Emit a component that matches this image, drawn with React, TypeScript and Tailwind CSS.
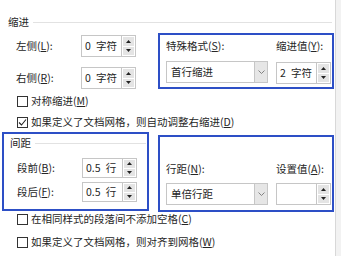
import type { ReactNode } from "react";

const boxBorder = "border-[#c6c6c6]";
const blue = "border-2 border-[#2d4fc6]";
const txt = "text-[10.5px] whitespace-nowrap";

function U({ children }: { children: ReactNode }) {
  return <span className="underline underline-offset-1">{children}</span>;
}

function Spinner() {
  return (
    <div className={`flex w-[14px] flex-col gap-[1px] border ${boxBorder} border-l-0 bg-white p-[1px]`}>
      <div className="flex flex-1 items-center justify-center bg-[#e4e4e4]">
        <svg width="5" height="3" viewBox="0 0 5 3">
          <path d="M2.5 0L5 3H0z" fill="#222" />
        </svg>
      </div>
      <div className="flex flex-1 items-center justify-center bg-[#e4e4e4]">
        <svg width="5" height="3" viewBox="0 0 5 3">
          <path d="M0 0h5L2.5 3z" fill="#222" />
        </svg>
      </div>
    </div>
  );
}

function SpinBox({ value, h = "h-[22px]" }: { value: string; h?: string }) {
  return (
    <div className={`flex ${h}`}>
      <div className={`flex w-[41px] items-center border ${boxBorder} bg-white pl-[3px] ${txt}`}>
        {value}
      </div>
      <Spinner />
    </div>
  );
}

function Select({ value }: { value: string }) {
  return (
    <div className={`flex h-[22px] w-[102px] border ${boxBorder} bg-white`}>
      <div className={`flex flex-1 items-center pl-[4px] ${txt}`}>{value}</div>
      <div className={`flex w-[13px] items-center justify-center border-l ${boxBorder} bg-[#e6e6e6]`}>
        <svg width="7" height="4" viewBox="0 0 7 4">
          <path d="M0.5 0.5L3.5 3.5L6.5 0.5" fill="none" stroke="#777" strokeWidth="0.9" />
        </svg>
      </div>
    </div>
  );
}

function Check({ checked, children, className = "" }: { checked?: boolean; children: ReactNode; className?: string }) {
  return (
    <div className={`flex h-[14px] items-center pl-[17px] ${className}`}>
      <div className="flex h-[11px] w-[11px] items-center justify-center border border-[#333] bg-white">
        {checked && (
          <svg width="9" height="9" viewBox="0 0 9 9">
            <path d="M1 4.5L3.5 7L8 1.5" fill="none" stroke="#222" strokeWidth="1.1" />
          </svg>
        )}
      </div>
      <span className={`ml-[3px] leading-none ${txt}`}>{children}</span>
    </div>
  );
}

function Heading({ children, className = "" }: { children: ReactNode; className?: string }) {
  return (
    <div className={`flex h-[16px] items-center ${className}`}>
      <span className={txt}>{children}</span>
      <div className="ml-[4px] h-px flex-1 bg-[#e2e2e2]" />
    </div>
  );
}

function Field({ label, children }: { label: ReactNode; children: ReactNode }) {
  return (
    <div className="flex items-center">
      <span className={`w-[65px] ${txt}`}>{label}</span>
      {children}
    </div>
  );
}

export default function App() {
  return (
    <div className="flex h-[256px] w-[341px] bg-[#f2f2f2] font-['Noto_Sans_CJK_SC',sans-serif] text-[#262626]">
      <div className="h-full w-[336px] border-r border-[#d8d8d8] bg-white">
        {/* 缩进 */}
        <Heading className="ml-[8px] mr-[3px] mt-[14px]">缩进</Heading>
        <div className="mt-[3px] flex">
          <div className="flex w-[158px] flex-col gap-[10px] pl-[16px] pt-[2px]">
            <Field label={<>左侧(<U>L</U>):</>}>
              <SpinBox value={"0\u2002字符"} />
            </Field>
            <Field label={<>右侧(<U>R</U>):</>}>
              <SpinBox value={"0\u2002字符"} />
            </Field>
          </div>
          <div className={`h-[56px] w-[176px] ${blue} flex gap-[8px] px-[6px] pt-[3px]`}>
            <div className="flex flex-col">
              <span className={`h-[16px] leading-[16px] ${txt}`}>
                特殊格式(<U>S</U>):
              </span>
              <div className="mt-[7px]">
                <Select value="首行缩进" />
              </div>
            </div>
            <div className="flex flex-col">
              <span className={`h-[16px] leading-[16px] ${txt}`}>
                缩进值(<U>Y</U>):
              </span>
              <div className="mt-[8px]">
                <SpinBox value={"2\u2002字符"} />
              </div>
            </div>
          </div>
        </div>

        <Check className="mt-[5px]">
          对称缩进(<U>M</U>)
        </Check>
        <Check checked className="mt-[7px]">
          如果定义了文档网格，则自动调整右缩进(<U>D</U>)
        </Check>

        {/* 间距 */}
        <div className="mt-[3px] flex items-start">
          <div className={`ml-[2px] h-[79px] w-[147px] ${blue} pl-[6px] pr-[1px] pt-[1px]`}>
            <Heading>间距</Heading>
            <div className="ml-[7px] mt-[7px] flex flex-col gap-[4px]">
              <Field label={<>段前(<U>B</U>):</>}>
                <SpinBox value={"0.5\u2002行"} h="h-[20px]" />
              </Field>
              <Field label={<>段后(<U>F</U>):</>}>
                <SpinBox value={"0.5\u2002行"} h="h-[20px]" />
              </Field>
            </div>
          </div>
          <div className={`ml-[9px] mt-[3px] h-[77px] w-[176px] ${blue} flex gap-[8px] px-[6px] pt-[24px]`}>
            <div className="flex flex-col">
              <span className={`h-[16px] leading-[16px] ${txt}`}>
                行距(<U>N</U>):
              </span>
              <div className="mt-[6px]">
                <Select value="单倍行距" />
              </div>
            </div>
            <div className="flex flex-col">
              <span className={`h-[16px] leading-[16px] ${txt}`}>
                设置值(<U>A</U>):
              </span>
              <div className="mt-[6px]">
                <SpinBox value="" />
              </div>
            </div>
          </div>
        </div>

        <Check className="mt-[0px]">
          在相同样式的段落间不添加空格(<U>C</U>)
        </Check>
        <Check className="mt-[9px]">
          如果定义了文档网格，则对齐到网格(<U>W</U>)
        </Check>
      </div>
    </div>
  );
}
